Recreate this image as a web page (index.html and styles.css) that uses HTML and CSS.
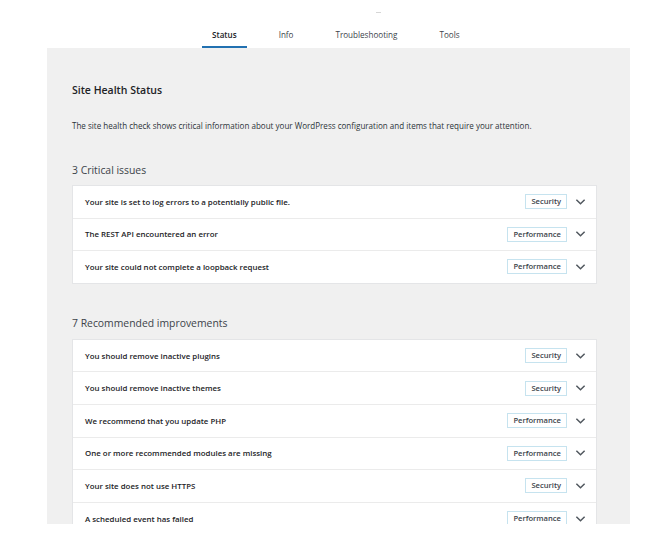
FILE: index.html
```html
<!DOCTYPE html>
<html lang="en">
<head>
<meta charset="utf-8">
<title>Site Health Status</title>
<link rel="stylesheet" href="styles.css">
</head>
<body>
<div class="page">
  <header class="top">
    <span class="mark"></span>
    <nav class="tabs">
      <a class="tab active">Status</a>
      <a class="tab">Info</a>
      <a class="tab">Troubleshooting</a>
      <a class="tab">Tools</a>
    </nav>
  </header>
  <main class="panel">
    <h1 class="title">Site Health Status</h1>
    <p class="desc">The site health check shows critical information about your WordPress configuration and items that require your attention.</p>

    <h2 class="group">3 Critical issues</h2>
    <ul class="list">
      <li class="row"><span class="label">Your site is set to log errors to a potentially public file.</span><span class="badge">Security</span><svg class="chev" viewBox="0 0 12 8"><path d="M1.5 1.5 L6 6 L10.5 1.5"/></svg></li>
      <li class="row"><span class="label">The REST API encountered an error</span><span class="badge">Performance</span><svg class="chev" viewBox="0 0 12 8"><path d="M1.5 1.5 L6 6 L10.5 1.5"/></svg></li>
      <li class="row"><span class="label">Your site could not complete a loopback request</span><span class="badge">Performance</span><svg class="chev" viewBox="0 0 12 8"><path d="M1.5 1.5 L6 6 L10.5 1.5"/></svg></li>
    </ul>

    <h2 class="group">7 Recommended improvements</h2>
    <ul class="list">
      <li class="row"><span class="label">You should remove inactive plugins</span><span class="badge">Security</span><svg class="chev" viewBox="0 0 12 8"><path d="M1.5 1.5 L6 6 L10.5 1.5"/></svg></li>
      <li class="row"><span class="label">You should remove inactive themes</span><span class="badge">Security</span><svg class="chev" viewBox="0 0 12 8"><path d="M1.5 1.5 L6 6 L10.5 1.5"/></svg></li>
      <li class="row"><span class="label">We recommend that you update PHP</span><span class="badge">Performance</span><svg class="chev" viewBox="0 0 12 8"><path d="M1.5 1.5 L6 6 L10.5 1.5"/></svg></li>
      <li class="row"><span class="label">One or more recommended modules are missing</span><span class="badge">Performance</span><svg class="chev" viewBox="0 0 12 8"><path d="M1.5 1.5 L6 6 L10.5 1.5"/></svg></li>
      <li class="row"><span class="label">Your site does not use HTTPS</span><span class="badge">Security</span><svg class="chev" viewBox="0 0 12 8"><path d="M1.5 1.5 L6 6 L10.5 1.5"/></svg></li>
      <li class="row"><span class="label">A scheduled event has failed</span><span class="badge">Performance</span><svg class="chev" viewBox="0 0 12 8"><path d="M1.5 1.5 L6 6 L10.5 1.5"/></svg></li>
    </ul>
  </main>
</div>
</body>
</html>
```

FILE: styles.css
```css
* { box-sizing: border-box; }
html, body { margin: 0; padding: 0; background: #fff; }
body {
  font-family: "Open Sans", "Noto Sans", sans-serif;
  color: #1d2327;
}
.page {
  width: 654px;
  height: 524px;
  overflow: hidden;
}
.top {
  position: relative;
  height: 48px;
}
.mark {
  position: absolute;
  left: 376px;
  top: 12px;
  width: 5px;
  height: 1px;
  background: #d6d6d6;
}
.tabs {
  display: flex;
  height: 48px;
  align-items: flex-end;
  padding-left: 202px;
  gap: 22px;
}
.tab {
  display: block;
  padding: 0 10px 5px;
  font-size: 8.1px;
  line-height: 12px;
  color: #3c434a;
  border-bottom: 2px solid transparent;
}
.tab.active {
  color: #1d2327;
  font-weight: 600;
  border-bottom-color: #2271b1;
}
.panel {
  margin-left: 47px;
  width: 583px;
  height: 476px;
  background: #f0f0f0;
  padding: 34px 33px 0 25px;
}
.title {
  margin: 0;
  font-size: 10.5px;
  line-height: 16px;
  font-weight: 600;
  color: #1d2327;
}
.desc {
  margin: 22px 0 0;
  font-size: 8.05px;
  line-height: 12px;
  color: #2c3338;
}
.group {
  margin: 30px 0 7px;
  font-size: 10.4px;
  line-height: 16px;
  font-weight: 400;
  color: #3c434a;
}
.list + .group { margin-top: 31px; margin-bottom: 8px; }
.list {
  list-style: none;
  margin: 0;
  padding: 0;
  background: #fff;
  border: 1px solid #e4e5e7;
}
.row {
  display: flex;
  align-items: center;
  height: 32.6px;
  padding: 0 10px 0 12px;
  border-top: 1px solid #ebebeb;
}
.row:first-child { border-top: 0; height: 31.6px; }
.label {
  flex: 1;
  font-size: 7.9px;
  font-weight: 600;
  color: #1d2327;
}
.badge {
  height: 15px;
  line-height: 13px;
  padding: 0 5px;
  border: 1px solid #c6e3ef;
  font-size: 7.6px;
  font-weight: 600;
  color: #3c434a;
}
.chev {
  width: 11px;
  height: 8px;
  margin-left: 8px;
  fill: none;
  stroke: #50575e;
  stroke-width: 1.6;
}
```
